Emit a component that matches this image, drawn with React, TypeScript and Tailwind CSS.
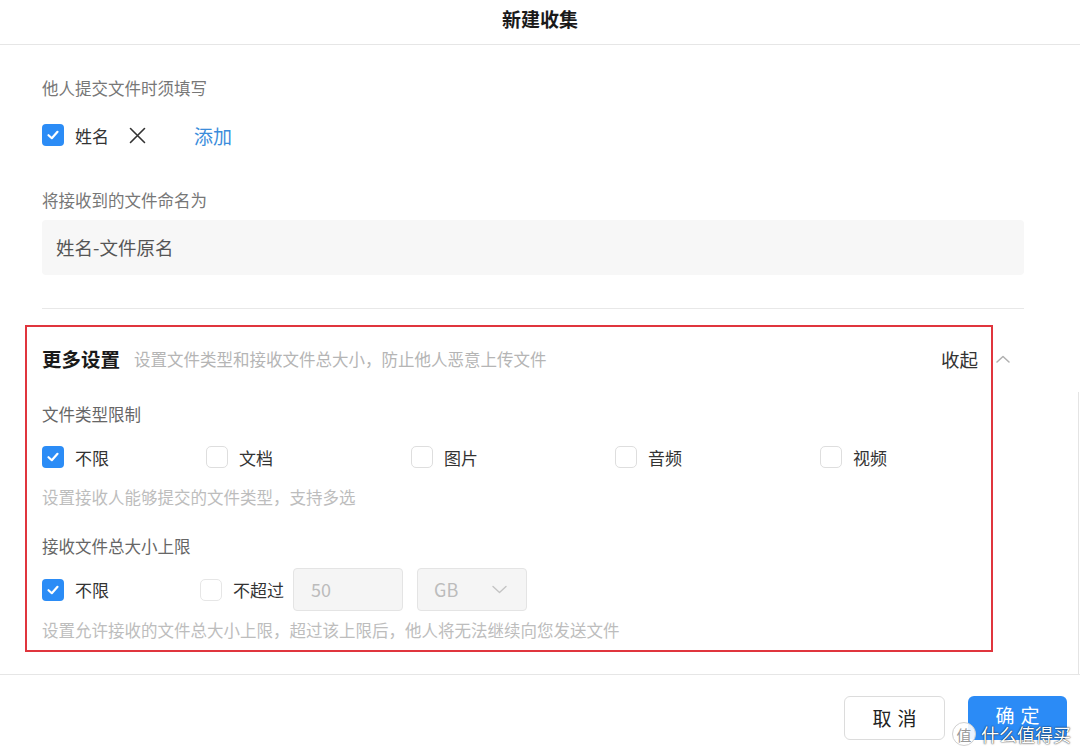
import React from "react";

const Check = ({ checked, light }: { checked: boolean; light?: boolean }) =>
  checked ? (
    <span className="flex h-[22px] w-[22px] shrink-0 items-center justify-center rounded-[4px] bg-[#2b8cf6]">
      <svg width="14" height="14" viewBox="0 0 14 14" fill="none">
        <path d="M2.5 7.2 L5.8 10.2 L11.5 3.8" stroke="white" strokeWidth="2.2" strokeLinecap="round" strokeLinejoin="round" />
      </svg>
    </span>
  ) : (
    <span className={`block h-[22px] w-[22px] shrink-0 rounded-[5px] border bg-white ${light ? "border-[#e6e6e6]" : "border-[#dedede]"}`} />
  );

const Opt = ({ label, checked, w }: { label: string; checked?: boolean; w: string }) => (
  <div className={`flex items-center ${w}`}>
    <Check checked={!!checked} />
    <span className="ml-[11px] text-[17px] leading-none text-[#333]">{label}</span>
  </div>
);

export default function App() {
  return (
    <div className="relative h-[756px] w-[1080px] overflow-hidden bg-white font-['Noto_Sans_CJK_SC','Noto_Sans',sans-serif]">
      {/* header */}
      <div className="flex h-[45px] items-center justify-center border-b border-[#e6e6e6] pb-[8px]">
        <span className="text-[19px] font-bold leading-none text-[#1a1a1a]">新建收集</span>
      </div>

      <div className="pl-[42px] pr-[56px]">
        <div className="mt-[31px] flex h-[24px] items-center text-[16.5px] text-[#777]">他人提交文件时须填写</div>

        <div className="mt-[23px] flex h-[24px] items-center">
          <Check checked />
          <span className="ml-[11px] text-[17px] leading-none text-[#333]">姓名</span>
          <svg className="ml-[20px]" width="17" height="17" viewBox="0 0 17 17">
            <path d="M1.5 1.5 L15.5 15.5 M15.5 1.5 L1.5 15.5" stroke="#333" strokeWidth="1.6" strokeLinecap="round" />
          </svg>
          <span className="ml-[48px] text-[19px] leading-none text-[#3b8ddb]">添加</span>
        </div>

        <div className="mt-[41px] flex h-[24px] items-center text-[16.5px] text-[#777]">将接收到的文件命名为</div>

        <div className="mt-[8px] flex h-[55px] items-center rounded-[4px] bg-[#f7f7f7] pl-[14px] text-[18.5px] text-[#555]">
          姓名-文件原名
        </div>

        <div className="mt-[33px] h-px bg-[#e8e8e8]" />

        <div className="relative pt-[38px]">
          <div className="pointer-events-none absolute left-[-17px] top-[16px] h-[327px] w-[968px] border-2 border-[#e0353d]" />

          <div className="flex h-[24px] items-center justify-between">
            <div className="flex items-center">
              <span className="text-[19.5px] font-bold leading-none text-[#1a1a1a]">更多设置</span>
              <span className="ml-[14px] text-[16.5px] leading-none text-[#b5b5b5]">设置文件类型和接收文件总大小，防止他人恶意上传文件</span>
            </div>
            <div className="flex items-center pr-[14px]">
              <span className="text-[18.5px] leading-none text-[#333]">收起</span>
              <svg className="ml-[18px]" width="14" height="8" viewBox="0 0 14 8" fill="none">
                <path d="M1 7 L7 1.5 L13 7" stroke="#b0b0b0" strokeWidth="1.5" strokeLinecap="round" strokeLinejoin="round" />
              </svg>
            </div>
          </div>

          <div className="mt-[31px] flex h-[24px] items-center text-[16.5px] text-[#666]">文件类型限制</div>

          <div className="mt-[19px] flex h-[24px] items-center">
            <Opt label="不限" checked w="w-[164px]" />
            <Opt label="文档" w="w-[205px]" />
            <Opt label="图片" w="w-[204px]" />
            <Opt label="音频" w="w-[205px]" />
            <Opt label="视频" w="w-[100px]" />
          </div>

          <div className="mt-[16px] flex h-[24px] items-center text-[16.5px] text-[#bdbdbd]">设置接收人能够提交的文件类型，支持多选</div>

          <div className="mt-[25px] flex h-[24px] items-center text-[16.5px] text-[#666]">接收文件总大小上限</div>

          <div className="mt-[10px] flex h-[43px] items-center">
            <Opt label="不限" checked w="w-[158px]" />
            <Check checked={false} light />
            <span className="ml-[11px] text-[17px] leading-none text-[#333]">不超过</span>
            <div className="ml-[9px] flex h-[43px] w-[110px] items-center rounded-[4px] border border-[#e4e4e4] bg-[#f5f5f5] pl-[17px] text-[18px] text-[#bcbcbc]">
              50
            </div>
            <div className="ml-[14px] flex h-[43px] w-[110px] items-center rounded-[4px] border border-[#e4e4e4] bg-[#f5f5f5] pl-[16px] text-[18px] text-[#bcbcbc]">
              GB
              <svg className="ml-[34px]" width="15" height="9" viewBox="0 0 15 9" fill="none">
                <path d="M1 1.5 L7.5 7.5 L14 1.5" stroke="#c4c4c4" strokeWidth="1.4" strokeLinecap="round" strokeLinejoin="round" />
              </svg>
            </div>
          </div>

          <div className="mt-[7px] flex h-[24px] items-center text-[16.5px] text-[#bdbdbd]">设置允许接收的文件总大小上限，超过该上限后，他人将无法继续向您发送文件</div>
        </div>
      </div>

      <div className="mt-[32px] h-px bg-[#e6e6e6]" />

      <div className="mt-[21px] flex justify-end gap-[23px] pr-[13px]">
        <button className="flex h-[44px] w-[101px] items-center justify-center rounded-[6px] border border-[#dcdcdc] bg-white text-[19px] tracking-[6px] text-[#222]">
          <span className="pl-[6px]">取消</span>
        </button>
        <button className="flex h-[44px] w-[99px] items-center justify-center rounded-[6px] bg-[#2b8bf6] text-[19px] tracking-[6px] text-white">
          <span className="pb-[6px] pl-[6px]">确定</span>
        </button>
      </div>

      {/* scroll track edge */}
      <div className="absolute left-[1078px] top-[392px] h-[282px] w-px bg-[#e4e4e4]" />

      {/* watermark */}
      <div className="absolute left-[952px] top-[722px] flex items-center">
        <span className="flex h-[24px] w-[24px] items-center justify-center rounded-full border border-[#d0d0d0] bg-white/90 text-[15px] leading-none text-[#999]">值</span>
        <span className="ml-[5px] text-[18px] leading-none text-white [text-shadow:0_0_2px_rgba(0,0,0,0.6),0_0_1px_rgba(0,0,0,0.8)]">什么值得买</span>
      </div>
    </div>
  );
}
